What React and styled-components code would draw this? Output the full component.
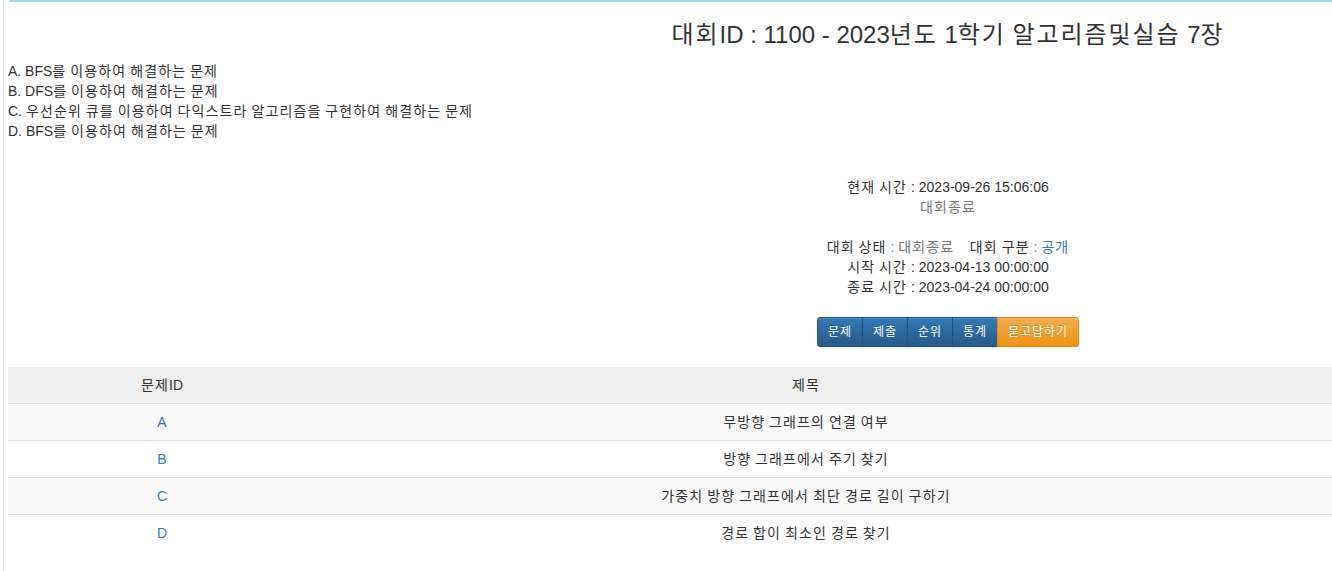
import React from "react";
import styled, { createGlobalStyle } from "styled-components";

const GlobalStyle = createGlobalStyle`
  html, body {
    margin: 0;
    padding: 0;
    background: #fff;
    overflow-x: hidden;
  }
  body {
    font-family: "Liberation Sans", "Noto Sans CJK KR", sans-serif;
    font-size: 14px;
    line-height: 20px;
    color: #333;
  }
  * { box-sizing: border-box; }
`;

const Hangul = styled.span`
  letter-spacing: 0.08em;
`;

function ko(text) {
  return text.split(/([\uAC00-\uD7A3]+)/).map((part, i) =>
    /[\uAC00-\uD7A3]/.test(part) ? <Hangul key={i}>{part}</Hangul> : part
  );
}

const Frame = styled.div`
  margin-left: 3px;
  border-left: 1px solid #ececec;
  min-height: 100vh;
  overflow: hidden;
`;

const TopRule = styled.div`
  margin-left: 6px;
  border-top: 2px solid #a4d7ef;
`;

const Container = styled.div`
  width: 1884px;
  padding-left: 4px;
`;

const Title = styled.h3`
  margin: 20px 0 0;
  font-size: 24px;
  line-height: 26px;
  font-weight: 400;
  text-align: center;
  color: #333;
`;

const Description = styled.div`
  margin-top: 13px;
  line-height: 20px;
`;

const Info = styled.div`
  margin-top: 36px;
  text-align: center;
  line-height: 20px;
`;

const Line = styled.div`
  min-height: 20px;
`;

const Muted = styled.span`
  color: #777;
`;

const Link = styled.a`
  color: #337ab7;
  text-decoration: none;
`;

const Toolbar = styled.div`
  margin-top: 20px;
  display: flex;
  justify-content: center;
`;

const BtnGroup = styled.div`
  display: inline-flex;
`;

const Btn = styled.a`
  display: inline-block;
  padding: 5px 10px;
  font-size: 12px;
  line-height: 18px;
  color: #fff;
  text-decoration: none;
  text-shadow: 0 -1px 0 rgba(0, 0, 0, 0.2);
  box-shadow: inset 0 1px 0 rgba(255, 255, 255, 0.15), 0 1px 1px rgba(0, 0, 0, 0.075);
  border: 1px solid ${(p) => (p.$warning ? "#e38d13" : "#245580")};
  background-image: ${(p) =>
    p.$warning
      ? "linear-gradient(to bottom, #f0ad4e 0%, #eb9316 100%)"
      : "linear-gradient(to bottom, #337ab7 0%, #265a88 100%)"};
  margin-left: -1px;
  border-radius: 0;
  &:first-child {
    margin-left: 0;
    border-top-left-radius: 3px;
    border-bottom-left-radius: 3px;
  }
  &:last-child {
    border-top-right-radius: 3px;
    border-bottom-right-radius: 3px;
  }
`;

const Table = styled.table`
  margin-top: 20px;
  width: 100%;
  border-collapse: collapse;
  border-spacing: 0;
`;

const Th = styled.th`
  width: ${(p) => p.$w || "auto"};
  padding: 8px;
  line-height: 20px;
  font-weight: normal;
  text-align: center;
  background: #eeeeee;
  border-bottom: 1px solid #dddddd;
`;

const Row = styled.tr`
  background: ${(p) => (p.$striped ? "#f9f9f9" : "#ffffff")};
`;

const Td = styled.td`
  padding: 8px;
  line-height: 20px;
  text-align: center;
  border-top: 1px solid #dddddd;
`;

const problems = [
  { id: "A", title: "무방향 그래프의 연결 여부" },
  { id: "B", title: "방향 그래프에서 주기 찾기" },
  { id: "C", title: "가중치 방향 그래프에서 최단 경로 길이 구하기" },
  { id: "D", title: "경로 합이 최소인 경로 찾기" },
];

const descriptions = [
  "A. BFS를 이용하여 해결하는 문제",
  "B. DFS를 이용하여 해결하는 문제",
  "C. 우선순위 큐를 이용하여 다익스트라 알고리즘을 구현하여 해결하는 문제",
  "D. BFS를 이용하여 해결하는 문제",
];

const buttons = ["문제", "제출", "순위", "통계"];

export default function App() {
  return (
    <>
      <GlobalStyle />
      <Frame>
        <TopRule />
        <Container>
          <Title>{ko("대회ID : 1100 - 2023년도 1학기 알고리즘및실습 7장")}</Title>
          <Description>
            {descriptions.map((d) => (
              <Line key={d}>{ko(d)}</Line>
            ))}
          </Description>
          <Info>
            <Line>{ko("현재 시간 : 2023-09-26 15:06:06")}</Line>
            <Line>
              <Muted>{ko("대회종료")}</Muted>
            </Line>
            <Line />
            <Line>
              {ko("대회 상태 ")}
              <Muted>: {ko("대회종료")}</Muted>
              {"\u00a0\u00a0\u00a0\u00a0"}
              {ko("대회 구분 ")}
              <Muted>:</Muted> <Link href="#">{ko("공개")}</Link>
            </Line>
            <Line>{ko("시작 시간 : 2023-04-13 00:00:00")}</Line>
            <Line>{ko("종료 시간 : 2023-04-24 00:00:00")}</Line>
          </Info>
          <Toolbar>
            <BtnGroup>
              {buttons.map((b) => (
                <Btn key={b} href="#">
                  {ko(b)}
                </Btn>
              ))}
              <Btn href="#" $warning>
                {ko("묻고답하기")}
              </Btn>
            </BtnGroup>
          </Toolbar>
          <Table>
            <thead>
              <tr>
                <Th $w="308px">{ko("문제ID")}</Th>
                <Th $w="980px">{ko("제목")}</Th>
                <Th />
              </tr>
            </thead>
            <tbody>
              {problems.map((p, i) => (
                <Row key={p.id} $striped={i % 2 === 0}>
                  <Td>
                    <Link href="#">{p.id}</Link>
                  </Td>
                  <Td>{ko(p.title)}</Td>
                  <Td />
                </Row>
              ))}
            </tbody>
          </Table>
        </Container>
      </Frame>
    </>
  );
}
